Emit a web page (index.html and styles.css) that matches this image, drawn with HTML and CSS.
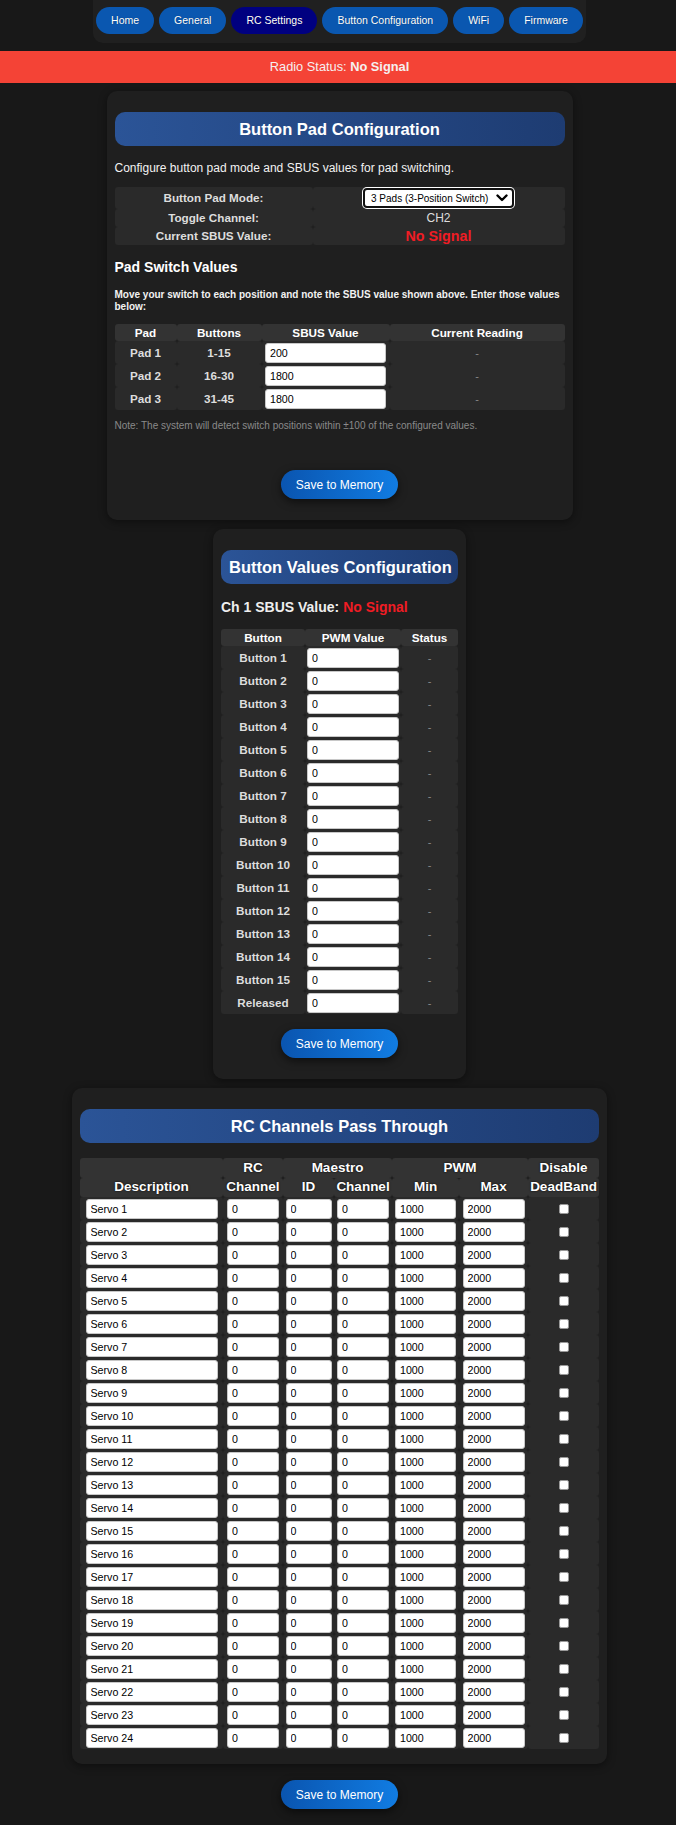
FILE: index.html
```html
<!DOCTYPE html>
<html lang="en">
<head>
<meta charset="utf-8">
<title>RC Settings</title>
<link rel="stylesheet" href="styles.css">
</head>
<body>
<nav class="nav">
  <a class="nav-btn">Home</a>
  <a class="nav-btn">General</a>
  <a class="nav-btn active">RC Settings</a>
  <a class="nav-btn">Button Configuration</a>
  <a class="nav-btn">WiFi</a>
  <a class="nav-btn">Firmware</a>
</nav>

<div class="status-bar">Radio Status: <b>No Signal</b></div>

<section class="card card-pad">
  <h2 class="card-title">Button Pad Configuration</h2>
  <p class="desc">Configure button pad mode and SBUS values for pad switching.</p>
  <table class="grid mode-table">
    <colgroup><col style="width:198px"><col style="width:252px"></colgroup>
    <tr>
      <td class="lbl">Button Pad Mode:</td>
      <td class="val">
        <span class="select-wrap">
          <select class="select"><option>3 Pads (3-Position Switch)</option></select>
          <svg class="chev" width="12" height="8" viewBox="0 0 12 8"><path d="M1.5 1.5 L6 6 L10.5 1.5" fill="none" stroke="#000" stroke-width="2.4" stroke-linecap="round" stroke-linejoin="round"/></svg>
        </span>
      </td>
    </tr>
    <tr><td class="lbl">Toggle Channel:</td><td class="val">CH2</td></tr>
    <tr><td class="lbl">Current SBUS Value:</td><td class="val red big">No Signal</td></tr>
  </table>

  <h3 class="sub">Pad Switch Values</h3>
  <p class="hint">Move your switch to each position and note the SBUS value shown above. Enter those values below:</p>
  <table class="grid pad-table">
    <colgroup><col style="width:62px"><col style="width:85px"><col style="width:128px"><col style="width:175px"></colgroup>
    <tr><th>Pad</th><th>Buttons</th><th>SBUS Value</th><th>Current Reading</th></tr>
    <tr><td class="lbl">Pad 1</td><td class="lbl">1-15</td><td><input class="inp w121" value="200"></td><td class="dash">-</td></tr>
    <tr><td class="lbl">Pad 2</td><td class="lbl">16-30</td><td><input class="inp w121" value="1800"></td><td class="dash">-</td></tr>
    <tr><td class="lbl">Pad 3</td><td class="lbl">31-45</td><td><input class="inp w121" value="1800"></td><td class="dash">-</td></tr>
  </table>
  <p class="note">Note: The system will detect switch positions within ±100 of the configured values.</p>
  <div class="actions"><button class="save">Save to Memory</button></div>
</section>

<section class="card card-values">
  <h2 class="card-title">Button Values Configuration</h2>
  <p class="sbus">Ch 1 SBUS Value: <span class="red">No Signal</span></p>
  <table class="grid val-table">
    <colgroup><col style="width:84px"><col style="width:96px"><col style="width:57px"></colgroup>
    <tr><th>Button</th><th>PWM Value</th><th>Status</th></tr>
    <tr><td class="lbl">Button 1</td><td><input class="inp w92" value="0"></td><td class="dash">-</td></tr>
    <tr><td class="lbl">Button 2</td><td><input class="inp w92" value="0"></td><td class="dash">-</td></tr>
    <tr><td class="lbl">Button 3</td><td><input class="inp w92" value="0"></td><td class="dash">-</td></tr>
    <tr><td class="lbl">Button 4</td><td><input class="inp w92" value="0"></td><td class="dash">-</td></tr>
    <tr><td class="lbl">Button 5</td><td><input class="inp w92" value="0"></td><td class="dash">-</td></tr>
    <tr><td class="lbl">Button 6</td><td><input class="inp w92" value="0"></td><td class="dash">-</td></tr>
    <tr><td class="lbl">Button 7</td><td><input class="inp w92" value="0"></td><td class="dash">-</td></tr>
    <tr><td class="lbl">Button 8</td><td><input class="inp w92" value="0"></td><td class="dash">-</td></tr>
    <tr><td class="lbl">Button 9</td><td><input class="inp w92" value="0"></td><td class="dash">-</td></tr>
    <tr><td class="lbl">Button 10</td><td><input class="inp w92" value="0"></td><td class="dash">-</td></tr>
    <tr><td class="lbl">Button 11</td><td><input class="inp w92" value="0"></td><td class="dash">-</td></tr>
    <tr><td class="lbl">Button 12</td><td><input class="inp w92" value="0"></td><td class="dash">-</td></tr>
    <tr><td class="lbl">Button 13</td><td><input class="inp w92" value="0"></td><td class="dash">-</td></tr>
    <tr><td class="lbl">Button 14</td><td><input class="inp w92" value="0"></td><td class="dash">-</td></tr>
    <tr><td class="lbl">Button 15</td><td><input class="inp w92" value="0"></td><td class="dash">-</td></tr>
    <tr><td class="lbl">Released</td><td><input class="inp w92" value="0"></td><td class="dash">-</td></tr>
  </table>
  <div class="actions"><button class="save">Save to Memory</button></div>
</section>

<section class="card card-rc">
  <h2 class="card-title">RC Channels Pass Through</h2>
  <table class="grid rc-table">
    <colgroup>
      <col style="width:143px"><col style="width:60px"><col style="width:51px"><col style="width:58px"><col style="width:67px"><col style="width:69px"><col style="width:71px">
    </colgroup>
    <thead>
      <tr><th></th><th>RC</th><th colspan="2">Maestro</th><th colspan="2">PWM</th><th>Disable</th></tr>
      <tr><th>Description</th><th>Channel</th><th>ID</th><th>Channel</th><th>Min</th><th>Max</th><th>DeadBand</th></tr>
    </thead>
    <tbody id="rc-body"></tbody>
  </table>
</section>

<div class="actions outer"><button class="save">Save to Memory</button></div>

<script>
  var body = document.getElementById('rc-body');
  var html = '';
  for (var i = 1; i <= 24; i++) {
    html += '<tr>' +
      '<td><input class="inp w132" value="Servo ' + i + '"></td>' +
      '<td><input class="inp w52" value="0"></td>' +
      '<td><input class="inp w46" value="0"></td>' +
      '<td><input class="inp w52" value="0"></td>' +
      '<td><input class="inp w61" value="1000"></td>' +
      '<td><input class="inp w62" value="2000"></td>' +
      '<td class="chk-cell"><input type="checkbox" class="chk"></td>' +
      '</tr>';
  }
  body.innerHTML = html;
</script>
</body>
</html>
```

FILE: styles.css
```css
* { box-sizing: border-box; }

body {
  margin: 0;
  background: #181818;
  color: #e6e6e6;
  font-family: "Liberation Sans", Arial, sans-serif;
  padding: 0 0 17px 3px;
}

/* navigation */
.nav {
  display: flex;
  gap: 5px;
  width: fit-content;
  margin: 0 auto;
  padding: 7px 3px 9px;
  background: #202020;
  border-radius: 0 0 10px 10px;
}
.nav-btn {
  display: block;
  height: 27px;
  line-height: 27px;
  padding: 0 15px;
  border-radius: 14px;
  background: #0a57b0;
  color: #fff;
  font-size: 10.5px;
  text-decoration: none;
  text-shadow: 0 0 1px rgba(0,0,0,.4);
}
.nav-btn.active { background: #000080; }

/* status */
.status-bar {
  margin: 8px 0 0 -3px;
  height: 32px;
  line-height: 32px;
  background: #f44336;
  color: #f4f0f0;
  text-align: center;
  font-size: 12.8px;
  padding-left: 3px;
}

/* cards */
.card {
  margin: 8px auto 0;
  background: #1f1f1f;
  border-radius: 10px;
  padding: 21px 8px 21px;
  box-shadow: 0 2px 8px rgba(0,0,0,.45);
}
.card-pad { width: 466px; }
.card-values { width: 253px; margin-top: 9px; }
.card-rc { width: 535px; margin-top: 9px; padding-bottom: 15px; }

.card-title {
  margin: 0;
  height: 34px;
  line-height: 34px;
  padding: 0 8px;
  border-radius: 10px;
  background: linear-gradient(90deg, #2b5497, #1e3c72);
  color: #fff;
  font-size: 16.5px;
  font-weight: bold;
  text-align: center;
  white-space: nowrap;
}

.desc {
  margin: 15px 0 0;
  font-size: 12px;
  line-height: 14px;
  color: #f2f2f2;
}

/* tables */
.grid {
  border-collapse: separate;
  border-spacing: 0;
  table-layout: fixed;
}
.grid td, .grid th {
  background: #2a2a2a;
  border-radius: 3px;
  text-align: center;
  vertical-align: middle;
  padding: 0 2px;
}
.grid th {
  background: #333;
  color: #fff;
  font-weight: bold;
  font-size: 11.7px;
  height: 17px;
  line-height: 14px;
}
.lbl {
  font-weight: bold;
  color: #ddd;
  font-size: 11.7px;
}
.val { color: #ddd; font-size: 12px; }
.red { color: #f01c24; font-weight: bold; }
.big { font-size: 14.3px; }
.dash { color: #888; font-size: 11px; }

.mode-table { width: 450px; margin-top: 12px; }
.mode-table td { line-height: 16px; height: 18px; padding: 1px 2px; }
.mode-table tr:first-child td { height: 21px; }

.select-wrap {
  position: relative;
  display: inline-block;
  vertical-align: middle;
}
.select {
  -webkit-appearance: none;
  appearance: none;
  display: block;
  width: 151px;
  height: 20px;
  padding: 0 0 0 6px;
  border: 2px solid #111;
  border-radius: 4px;
  box-shadow: 0 0 0 1px #fff;
  background: #fff;
  color: #000;
  font-family: "Liberation Sans", Arial, sans-serif;
  font-size: 10px;
}
.chev {
  position: absolute;
  right: 6px;
  top: 6px;
  pointer-events: none;
}

.sub {
  margin: 14px 0 0;
  font-size: 14px;
  line-height: 16px;
  color: #fff;
}
.hint {
  margin: 14px 0 0;
  font-size: 10px;
  line-height: 12px;
  font-weight: bold;
  color: #f2f2f2;
}

.pad-table { width: 450px; margin-top: 11px; }
.pad-table td { height: 23px; }

.note {
  margin: 10px 0 0;
  font-size: 10px;
  line-height: 12px;
  color: #8a8a8a;
}

/* inputs */
.inp {
  display: inline-block;
  vertical-align: middle;
  height: 20px;
  padding: 0 4px;
  border: 1px solid #c8c8c8;
  border-radius: 3px;
  background: #fff;
  color: #000;
  font-family: "Liberation Sans", Arial, sans-serif;
  font-size: 10.67px;
}
.w121 { width: 121px; }
.w92 { width: 92px; }
.w132 { width: 132px; }
.w52 { width: 52px; }
.w46 { width: 46px; }
.w61 { width: 61px; }
.w62 { width: 62px; }

/* save button */
.actions { display: flex; justify-content: center; }
.card-pad .actions { margin-top: 38px; }
.card-values .actions { margin-top: 15px; }
.actions.outer { margin-top: 16px; }
.save {
  height: 29px;
  padding: 0 15px;
  border: 0;
  border-radius: 15px;
  background: linear-gradient(90deg, #0a55b0, #117ce2);
  color: #fff;
  font-family: "Liberation Sans", Arial, sans-serif;
  font-size: 12px;
  box-shadow: 0 3px 8px rgba(0,0,0,.55);
}

/* values card */
.sbus {
  margin: 15px 0 0;
  font-size: 14px;
  line-height: 16px;
  font-weight: bold;
  color: #eee;
  white-space: nowrap;
}
.val-table { width: 237px; margin-top: 14px; }
.val-table td { height: 23px; }

/* rc table */
.rc-table { width: 519px; margin-top: 15px; }
.rc-table th {
  font-size: 13.5px;
  height: 19.5px;
  line-height: 16px;
  text-shadow: 0 0 2px #000;
}
.rc-table td { height: 23px; }
.chk {
  -webkit-appearance: none;
  appearance: none;
  display: inline-block;
  vertical-align: middle;
  width: 10px;
  height: 10px;
  margin: 0;
  background: #fff;
  border: 1px solid #999;
  border-radius: 2px;
}
```
